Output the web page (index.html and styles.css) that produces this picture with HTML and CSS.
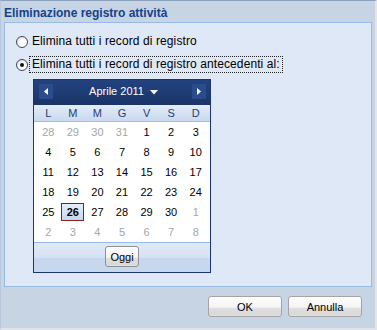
FILE: index.html
```html
<!DOCTYPE html>
<html lang="it">
<head>
<meta charset="utf-8">
<title>Eliminazione registro attività</title>
<link rel="stylesheet" href="styles.css">
</head>
<body>
<div class="window">
  <div class="title">Eliminazione registro attività</div>
  <div class="panel">
    <div class="opt">
      <span class="radio"></span>
      <span class="label">Elimina tutti i record di registro</span>
    </div>
    <div class="opt">
      <span class="radio checked"></span>
      <span class="label focus">Elimina tutti i record di registro antecedenti al:</span>
    </div>
    <div class="cal">
      <div class="cal-head">
        <span class="nav"><svg width="14" height="15" viewBox="0 0 14 15"><polygon points="9,4 9,11 5,7.5" fill="#fff"/></svg></span>
        <span class="month">Aprile 2011 <svg class="drop" width="8" height="5" viewBox="0 0 8 5"><polygon points="0,0 8,0 4,4.5" fill="#fff"/></svg></span>
        <span class="nav"><svg width="14" height="15" viewBox="0 0 14 15"><polygon points="5,4 5,11 9,7.5" fill="#fff"/></svg></span>
      </div>
      <div class="dow">
        <span>L</span><span>M</span><span>M</span><span>G</span><span>V</span><span>S</span><span>D</span>
      </div>
      <div class="days">
        <span class="other">28</span><span class="other">29</span><span class="other">30</span><span class="other">31</span><span>1</span><span>2</span><span>3</span>
        <span>4</span><span>5</span><span>6</span><span>7</span><span>8</span><span>9</span><span>10</span>
        <span>11</span><span>12</span><span>13</span><span>14</span><span>15</span><span>16</span><span>17</span>
        <span>18</span><span>19</span><span>20</span><span>21</span><span>22</span><span>23</span><span>24</span>
        <span>25</span><span class="today"><b>26</b></span><span>27</span><span>28</span><span>29</span><span>30</span><span class="other">1</span>
        <span class="other">2</span><span class="other">3</span><span class="other">4</span><span class="other">5</span><span class="other">6</span><span class="other">7</span><span class="other">8</span>
      </div>
      <div class="cal-foot">
        <button class="btn oggi">Oggi</button>
      </div>
    </div>
  </div>
  <div class="actions">
    <button class="btn">OK</button>
    <button class="btn">Annulla</button>
  </div>
</div>
</body>
</html>
```
FILE: styles.css
```css
html, body {
  margin: 0;
  padding: 0;
}
body {
  width: 377px;
  height: 330px;
  overflow: hidden;
  font-family: "Liberation Sans", Arial, sans-serif;
}
.window {
  box-sizing: border-box;
  width: 377px;
  height: 330px;
  background: #c7d4e3;
  border-top: 1px solid #8aa0bd;
  border-left: 1px solid #b8c8dc;
  border-right: 2px solid #e3e5e9;
  border-bottom: 2px solid #dfe2e6;
  display: flex;
  flex-direction: column;
}
.title {
  box-sizing: border-box;
  height: 21px;
  padding: 5px 0 0 3px;
  font-size: 12px;
  line-height: 14px;
  font-weight: bold;
  color: #15428b;
}
.panel {
  box-sizing: border-box;
  width: 368px;
  height: 265px;
  margin-left: 3px;
  border: 1px solid #99bbe8;
  background: #dfe8f6;
  padding: 10px 0 0 11px;
}
.opt {
  display: flex;
  align-items: center;
  height: 17px;
  margin-bottom: 6px;
  font-size: 12px;
  letter-spacing: 0.1px;
  color: #000;
}
.opt:last-of-type { margin-bottom: 0; }
.radio {
  box-sizing: border-box;
  width: 12px;
  height: 12px;
  border-radius: 50%;
  border: 1px solid #3d4a58;
  background: radial-gradient(circle at 65% 65%, #ffffff 0, #ffffff 35%, #d8d8d0 100%);
  display: flex;
  align-items: center;
  justify-content: center;
  margin-top: 1px;
}
.radio.checked::after {
  content: "";
  width: 4px;
  height: 4px;
  border-radius: 50%;
  background: #111;
}
.label {
  box-sizing: border-box;
  height: 17px;
  line-height: 15px;
  margin-left: 1px;
  padding: 0 2px;
  border: 1px dotted transparent;
}
.label.focus {
  border-color: #222;
}
.cal {
  width: 176px;
  margin: 4px 0 0 17px;
  border: 1px solid #1b3570;
  background: #fff;
  font-size: 11px;
}
.cal-head {
  height: 25px;
  display: flex;
  align-items: flex-start;
  justify-content: space-between;
  padding: 4px 4px 0 5px;
  box-sizing: border-box;
  background: linear-gradient(#23437f, #1a3467);
}
.nav {
  width: 14px;
  height: 15px;
  background: #2a4c8c;
  border-radius: 1px;
  display: block;
}
.nav svg { display: block; }
.month {
  color: #fff;
  font-size: 11px;
  line-height: 15px;
  display: flex;
  align-items: center;
  gap: 6px;
  margin-left: 2px;
}
.drop { display: block; margin-top: 1px; }
.dow {
  height: 16px;
  display: grid;
  grid-template-columns: repeat(7, 1fr);
  padding: 0 2px;
  background: linear-gradient(#e4ecf8, #c9d9ef);
  border-bottom: 1px solid #a6bedf;
  color: #233f72;
  line-height: 16px;
  text-align: center;
}
.days {
  display: grid;
  grid-template-columns: repeat(7, 1fr);
  grid-auto-rows: 20px;
  padding: 0 2px;
  text-align: center;
  color: #000;
}
.days span {
  display: flex;
  align-items: center;
  justify-content: center;
}
.days .other { color: #a6a6a6; }
.days .today b {
  box-sizing: border-box;
  width: 23px;
  height: 18px;
  display: flex;
  align-items: center;
  justify-content: center;
  border: 1px solid #8b1c1c;
  background: linear-gradient(#e6eef9, #c4d7ef);
}
.cal-foot {
  height: 30px;
  box-sizing: border-box;
  border-top: 1px solid #99bbe8;
  background: linear-gradient(#e0e9f6 0, #d6e2f3 50%, #c7d8ee 50%, #c6d7ee 100%);
  display: flex;
  justify-content: center;
  padding-top: 3px;
}
.btn {
  box-sizing: border-box;
  width: 74px;
  height: 21px;
  padding: 0;
  border: 1px solid #a4a4a4;
  border-radius: 3px;
  background: linear-gradient(#fdfdfd 0, #f4f4f4 55%, #e0e0e0 56%, #d8d8d8 95%, #ececec 100%);
  font-family: "Liberation Sans", Arial, sans-serif;
  font-size: 11px;
  color: #000;
}
.oggi {
  width: 34px;
  border-color: #8d9094;
}
.actions {
  display: flex;
  justify-content: flex-end;
  gap: 6px;
  padding: 9px 13px 0 0;
}
```
